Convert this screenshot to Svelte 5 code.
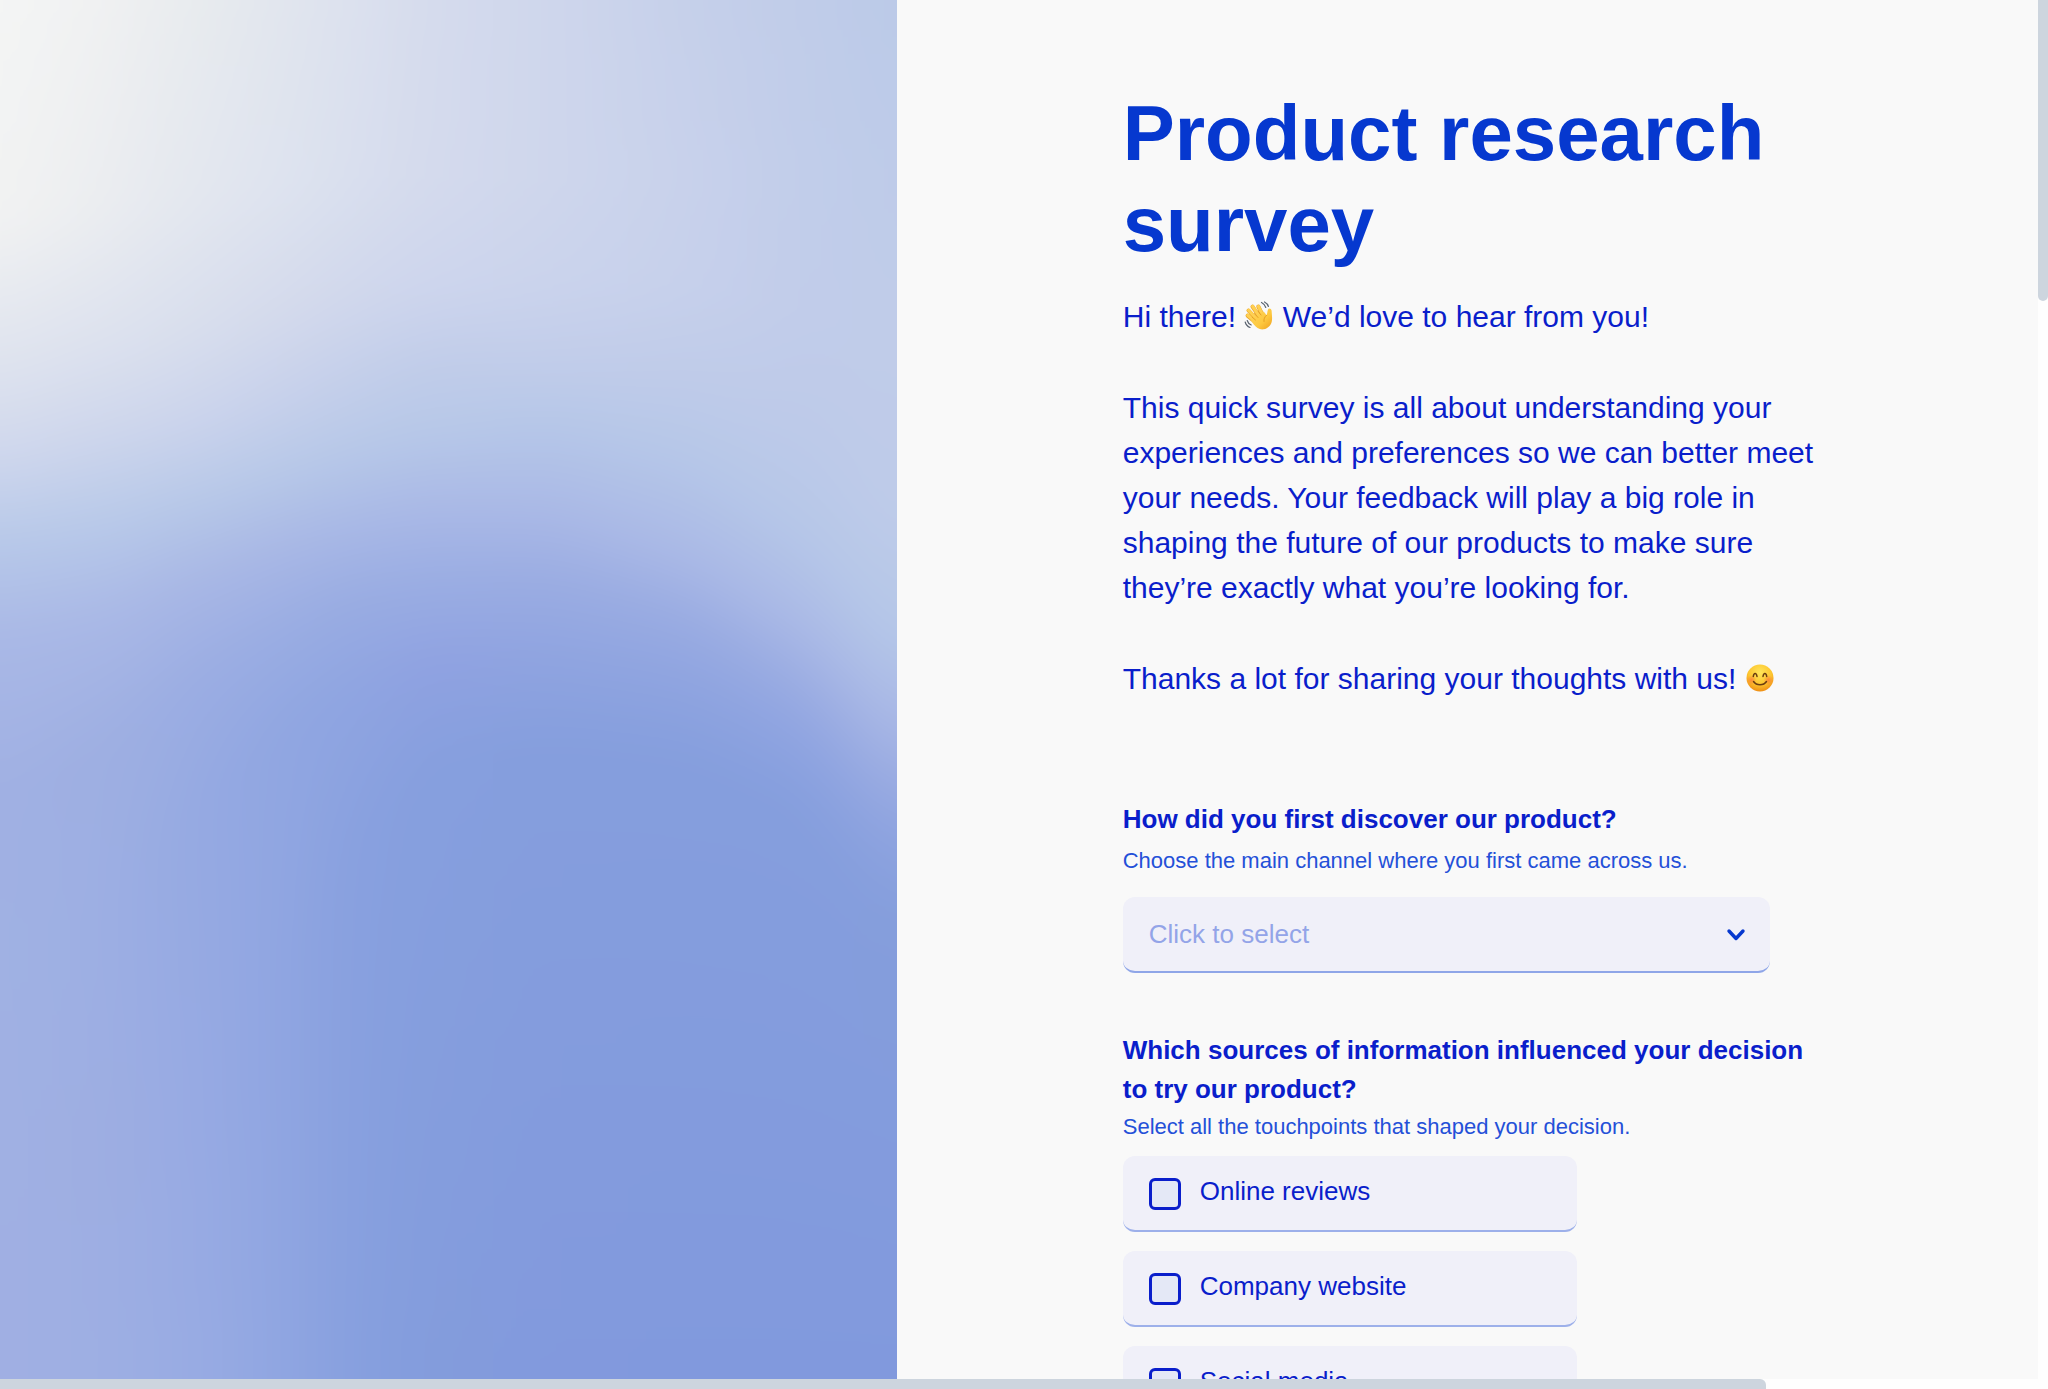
<script>
  const options = ['Online reviews', 'Company website', 'Social media'];
  let channel = $state('');
  let picked = $state([]);

  // Gradient artwork: each key column holds [y, colour] stops from top to bottom.
  const keys = [
    { x: 0, s: [[0, 'f4f5f4'], [220, 'f1f2f2'], [375, 'dde2ee'], [455, 'cfd7ed'], [540, 'b8c9e9'], [640, 'a9b8e6'], [795, 'a0b0e3'], [950, 'a0b1e3'], [1150, 'a0b0e3'], [1379, 'a0afe3']] },
    { x: 0.11, s: [[0, 'f0f1f2'], [210, 'ebedf0'], [350, 'dce1ee'], [435, 'ced6ec'], [525, 'b8c9e9'], [620, 'a9b8e6'], [750, '9eafe2'], [950, '9dafe3'], [1150, '9eaee2'], [1379, '9eafe3']] },
    { x: 0.22, s: [[0, 'e8ebee'], [200, 'e3e7ef'], [330, 'd8deed'], [425, 'cad3ec'], [502, 'b7c8e8'], [582, 'a8b7e5'], [675, '9bade3'], [800, '95a9e2'], [1100, '97aae3'], [1379, '98abe3']] },
    { x: 0.32, s: [[0, 'e1e5ee'], [190, 'dde3ef'], [310, 'd4daec'], [402, 'c6d0eb'], [472, 'b7c8e8'], [548, 'a8b7e5'], [625, '9aade3'], [720, '90a6e1'], [1000, '8fa5e1'], [1379, '8fa5e1']] },
    { x: 0.39, s: [[0, 'dce1ee'], [180, 'd9dfee'], [300, 'd0d7ec'], [387, 'c2ceea'], [450, 'b7c8e8'], [527, 'a8b8e6'], [600, '99ace2'], [690, '8fa5e1'], [850, '88a0df'], [1379, '87a0df']] },
    { x: 0.48, s: [[0, 'd5dbed'], [180, 'd4daed'], [290, 'cdd5ed'], [368, 'c0cce9'], [430, 'b7c8e8'], [510, 'a9b8e6'], [580, '9aade3'], [665, '8fa1e1'], [760, '869fde'], [1379, '839cdc']] },
    { x: 0.62, s: [[0, 'ced6ec'], [180, 'ced6ec'], [285, 'cad3ec'], [355, 'c2cdea'], [422, 'b6c7e8'], [515, 'a9b8e6'], [582, '9aace2'], [658, '8fa4e0'], [745, '859edd'], [1379, '8299dd']] },
    { x: 0.77, s: [[0, 'c5d0ea'], [180, 'c8d1eb'], [290, 'c6d0eb'], [375, 'bfcbe9'], [455, 'b6c7e8'], [562, 'a9b8e6'], [615, '9aace2'], [680, '8fa4e0'], [760, '859edd'], [1379, '8199dd']] },
    { x: 0.9, s: [[0, 'c0cce9'], [180, 'c1cdea'], [310, 'c1ccea'], [430, 'bdcae9'], [535, 'b6c7e8'], [634, 'a9b8e6'], [688, '9aace2'], [738, '8fa4e1'], [810, '859edd'], [1379, '8199dd']] },
    { x: 1, s: [[0, 'bbcae8'], [180, 'becbe9'], [340, 'c0cce9'], [520, 'becbe9'], [645, 'b5c7e8'], [730, 'a9b8e6'], [785, '9cade2'], [845, '8fa4e0'], [930, '859edc'], [1379, '8199dd']] }
  ];
  const rgb = (h) => [0, 2, 4].map((i) => parseInt(h.slice(i, i + 2), 16));
  const count = 60;
  const strips = Array.from({ length: count }, (_, n) => {
    const x = (n + 0.5) / count;
    const k = Math.max(1, keys.findIndex((c) => c.x >= x));
    const a = keys[k - 1];
    const b = keys[k];
    const t = (x - a.x) / (b.x - a.x);
    return a.s.map(([y, c], i) => {
      const [y2, c2] = b.s[i];
      const q = rgb(c2);
      return {
        at: (y + (y2 - y) * t) / 1379,
        color: `rgb(${rgb(c).map((v, j) => Math.round(v + (q[j] - v) * t)).join(',')})`
      };
    });
  });
</script>

<div class="page">
  <svg class="art" viewBox="0 0 600 1379" preserveAspectRatio="none" aria-hidden="true">
    <defs>
      {#each strips as stops, n}
        <linearGradient id="strip{n}" x1="0" y1="0" x2="0" y2="1">
          {#each stops as stop}<stop offset={stop.at} stop-color={stop.color} />{/each}
        </linearGradient>
      {/each}
      <filter id="soften" filterUnits="userSpaceOnUse" x="-80" y="-80" width="760" height="1539" color-interpolation-filters="sRGB">
        <feGaussianBlur stdDeviation="18 18" />
      </filter>
    </defs>
    <g filter="url(#soften)">
      {#each strips as stops, n}
        {@const first = n === 0}
        {@const last = n === count - 1}
        {@const x = first ? -80 : n * 10}
        {@const w = first || last ? 91 : 11}
        <rect {x} y="-80" width={w} height="81" fill={stops[0].color} />
        <rect {x} y="1378" width={w} height="81" fill={stops[9].color} />
        <rect {x} y="0" width={w} height="1379" fill="url(#strip{n})" />
      {/each}
    </g>
  </svg>

  <main>
    <form>
      <h1>Product research survey</h1>
      <div class="intro">
        <p>
          Hi there!
          <svg class="emoji" viewBox="0 0 30 30" role="img" aria-label="waving hand">
            <defs>
              <linearGradient id="skin" x1="0" y1="0" x2="1" y2="1">
                <stop offset="0" stop-color="#ffd65c" />
                <stop offset="0.6" stop-color="#fdc83f" />
                <stop offset="1" stop-color="#ee9f1e" />
              </linearGradient>
            </defs>
            <path d="M10 20 3.600 14.600M11.500 17 4.500 9.500M14.500 14.500 8.500 5.600M18 13 14.300 5.500" stroke="#e9a52b" stroke-width="4" stroke-linecap="round" />
            <path d="M10 19.500 3.800 14.300M11.500 16.500 4.700 9.300M14.500 14 8.700 5.400M18 13 14.500 5.400" stroke="#ffd052" stroke-width="3.200" stroke-linecap="round" />
            <path d="M7.500 17.500 19.500 10.500C21 12 21.800 13.200 22.600 14.200 23.400 12.500 23.200 10.500 24 8.500 24.600 7 27.500 7.400 27.600 9.800 27.700 12.500 28.300 15.500 28 19 27.600 24 24 27.600 19.600 28.300 15.500 28.900 12.200 26.600 9.600 23.200 8 21 6.500 19.500 7.500 17.500Z" fill="url(#skin)" />
            <path d="M22.600 14.200C20.500 16 19.600 18 20 20.500M8 16 11.500 19M10.500 12.500 14 16.500M14 10 17 14" fill="none" stroke="#e39a20" stroke-width="0.900" stroke-linecap="round" />
            <path d="M17.500 1.500C19.500 2.500 21.200 4.300 21.800 6.500M20.500 1C22.500 2 23.800 3.500 24.400 5.500M1.200 21C1.800 23.500 3.500 25.500 6 26.500M3.200 19.500C3.800 21.500 5.200 23.200 7.200 24" fill="none" stroke="#5b6470" stroke-width="1.200" stroke-linecap="round" />
          </svg>
          We’d love to hear from you!
        </p>
        <p>
          This quick survey is all about understanding your experiences and preferences so we can
          better meet your needs. Your feedback will play a big role in shaping the future of our
          products to make sure they’re exactly what you’re looking for.
        </p>
        <p>
          Thanks a lot for sharing your thoughts with us!
          <svg class="emoji" viewBox="0 0 30 30" role="img" aria-label="smiling face">
            <defs>
              <radialGradient id="face" cx="0.5" cy="0.3" r="0.72">
                <stop offset="0" stop-color="#ffe65a" />
                <stop offset="0.6" stop-color="#fdc52f" />
                <stop offset="1" stop-color="#ee8a12" />
              </radialGradient>
              <radialGradient id="blush">
                <stop offset="0" stop-color="#fb7a3c" stop-opacity="0.8" />
                <stop offset="1" stop-color="#fb7a3c" stop-opacity="0" />
              </radialGradient>
            </defs>
            <circle cx="15" cy="15" r="13.500" fill="url(#face)" />
            <circle cx="6.500" cy="17" r="5" fill="url(#blush)" />
            <circle cx="23.500" cy="17" r="5" fill="url(#blush)" />
            <path d="M8.300 13.500C8.800 9.500 11.400 9.500 12 13.500M18 13.500C18.600 9.500 21.200 9.500 21.700 13.500M8.500 18.500C11.500 22.800 18.500 22.800 21.500 18.500" fill="none" stroke="#6b3d10" stroke-width="1.500" stroke-linecap="round" />
          </svg>
        </p>
      </div>

      <section class="question channel">
        <label class="title" for="channel">How did you first discover our product?</label>
        <p class="hint" id="channel-hint">Choose the main channel where you first came across us.</p>
        <div class="select">
          <select id="channel" aria-describedby="channel-hint" bind:value={channel}>
            <option value="" disabled>Click to select</option>
          </select>
          <svg viewBox="0 0 20 14" aria-hidden="true">
            <path d="M3 3 10 10.500 17 3" fill="none" stroke="#0638cf" stroke-width="3.400" stroke-linecap="round" stroke-linejoin="round" />
          </svg>
        </div>
      </section>

      <fieldset class="question">
        <legend class="title">Which sources of information influenced your decision to try our product?</legend>
        <p class="hint">Select all the touchpoints that shaped your decision.</p>
        <div class="options">
          {#each options as option}
            <label class="option">
              <input type="checkbox" value={option} bind:group={picked} />
              <span>{option}</span>
            </label>
          {/each}
        </div>
      </fieldset>
    </form>
  </main>

  <div class="bar vertical" aria-hidden="true"><div class="thumb"></div></div>
  <div class="bar horizontal" aria-hidden="true"><div class="thumb"></div></div>
</div>

<style>
  .page {
    display: grid;
    grid-template-columns: 44fr 56fr 10px;
    grid-template-rows: minmax(0, 1fr) 10px;
    height: 100vh;
    overflow: hidden;
    background: #fefefe;
    color: #0a1ecb;
    font-family: 'Liberation Sans', Arial, sans-serif;
  }
  .art {
    display: block;
    width: 100%;
    height: 100%;
  }
  main {
    overflow: hidden;
    background: #f9f9f9;
    padding: 88px 216px 0 226px;
  }
  h1 {
    margin: 0 0 24px;
    font-size: 78px;
    line-height: 91px;
    color: #0638cf;
  }
  p {
    margin: 0;
  }
  .intro {
    display: flex;
    flex-direction: column;
    gap: 46px;
    margin-bottom: 99px;
    font-size: 30px;
    line-height: 45px;
  }
  .emoji {
    width: 30px;
    height: 30px;
    vertical-align: -4px;
  }
  .question {
    margin: 0 0 58px;
    padding: 0;
    border: 0;
    min-width: 0;
  }
  .title {
    display: block;
    padding: 0;
    font-size: 26px;
    line-height: 39px;
    font-weight: 700;
  }
  .channel .title {
    margin-bottom: 4px;
  }
  .hint {
    font-size: 22px;
    line-height: 36px;
    color: #2450d8;
  }
  .select {
    display: grid;
    width: 92.5%;
    margin-top: 18px;
  }
  .select > * {
    grid-area: 1 / 1;
  }
  .select svg {
    width: 20px;
    height: 14px;
    align-self: center;
    justify-self: end;
    margin-right: 24px;
    pointer-events: none;
  }
  select {
    appearance: none;
    height: 76px;
    padding: 0 60px 0 26px;
    border: 0;
    border-bottom: 2px solid #8fa6e8;
    border-radius: 12px;
    background: #f0f0f9;
    color: #93a4e8;
    font: inherit;
    font-size: 26px;
  }
  .options {
    display: flex;
    flex-direction: column;
    gap: 19px;
    width: 65%;
    margin-top: 11px;
  }
  .option {
    display: flex;
    gap: 19px;
    height: 76px;
    padding: 22px 26px 0;
    box-sizing: border-box;
    border-bottom: 2px solid #9db0ea;
    border-radius: 12px;
    background: #f0f0f9;
    font-size: 26px;
    line-height: 26px;
  }
  input {
    appearance: none;
    flex: none;
    width: 32px;
    height: 32px;
    margin: 0;
    border: 3px solid #0a1ecb;
    border-radius: 6px;
    background: #e4e8f6;
  }
  .bar {
    background: #fefefe;
  }
  .thumb {
    background: #cdd5de;
  }
  .vertical {
    grid-column: 3;
    grid-row: 1;
  }
  .vertical .thumb {
    height: 301px;
    border-radius: 0 0 6px 6px;
  }
  .horizontal {
    grid-column: 1 / -1;
    grid-row: 2;
  }
  .horizontal .thumb {
    width: 1766px;
    max-width: 100%;
    height: 10px;
    border-radius: 0 6px 0 0;
  }
</style>
